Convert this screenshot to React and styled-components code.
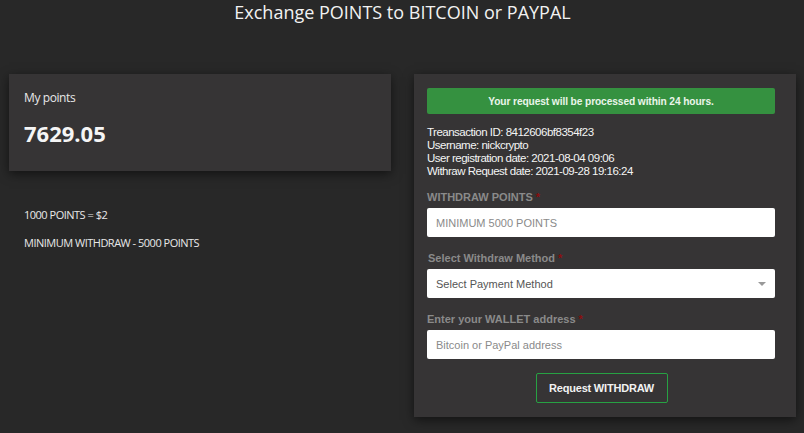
import React from "react";
import styled, { createGlobalStyle } from "styled-components";

const Global = createGlobalStyle`
  html, body { margin: 0; padding: 0; background: #282828; }
  body { font-family: "Open Sans", Arial, sans-serif; color: #f0f0f0; }
  * { box-sizing: border-box; }
`;

const Page = styled.div`
  width: 804px;
  height: 433px;
  padding: 0 8px 0 9px;
  overflow: hidden;
`;

const Title = styled.h1`
  margin: 0;
  padding-top: 0;
  height: 74px;
  text-align: center;
  font-family: "Open Sans", sans-serif;
  font-weight: 400;
  font-size: 18px;
  line-height: 26px;
  color: #f2f2f2;
  letter-spacing: 0;
  margin-top: -1px;
  margin-bottom: 1px;
`;

const Row = styled.div`
  display: grid;
  grid-template-columns: 382px 382px;
  column-gap: 23px;
  align-items: start;
`;

const Card = styled.div`
  background: #363435;
  box-shadow: 0 3px 10px rgba(0, 0, 0, 0.55);
  padding: ${(p) => p.$pad};
`;

const Label = styled.div`
  font-size: 12px;
  line-height: 16px;
  color: #e8e8e8;
  letter-spacing: -0.4px;
`;

const Big = styled.div`
  margin-top: 12px;
  font-size: 22px;
  font-weight: 700;
  line-height: 30px;
  color: #f5f5f5;
`;

const Note = styled.div`
  font-size: 11px;
  line-height: 16px;
  color: #e8e8e8;
  letter-spacing: -0.5px;
  margin-top: ${(p) => p.$mt}px;
  padding-left: 15px;
`;

const Banner = styled.div`
  background: #359140;
  border-radius: 2px;
  height: 26px;
  display: flex;
  align-items: center;
  justify-content: center;
  font-family: "Liberation Sans", Arial, sans-serif;
  font-weight: 700;
  font-size: 10.2px;
  color: #eaf5ea;
  letter-spacing: -0.1px;
`;

const Info = styled.div`
  margin-top: 12px;
  font-family: "Liberation Sans", Arial, sans-serif;
  font-size: 11.5px;
  line-height: 13px;
  color: #f4f4f4;
  letter-spacing: -0.5px;
`;

const Field = styled.div`
  margin-top: ${(p) => p.$mt}px;
`;

const FieldLabel = styled.div`
  font-family: "Liberation Sans", Arial, sans-serif;
  font-weight: 700;
  font-size: 11px;
  line-height: 14px;
  color: #8a8a8a;
  margin-bottom: 4px;
  padding-left: ${(p) => (p.$indent ? 1 : 0)}px;
  span { color: #8b0e0e; }
`;

const Input = styled.div`
  position: relative;
  height: 29px;
  background: #fff;
  border-radius: 2px;
  display: flex;
  align-items: center;
  padding-left: 9px;
  font-family: "Liberation Sans", Arial, sans-serif;
  font-size: 11px;
  color: ${(p) => (p.$dark ? "#555" : "#8a8a8a")};
`;

const Caret = styled.span`
  position: absolute;
  right: 9px;
  top: 13px;
  width: 0;
  height: 0;
  border-left: 4px solid transparent;
  border-right: 4px solid transparent;
  border-top: 4px solid #999;
`;

const ButtonRow = styled.div`
  display: flex;
  justify-content: center;
  margin-top: 14px;
`;

const Button = styled.button`
  width: 132px;
  height: 30px;
  background: transparent;
  border: 1px solid #27a143;
  border-radius: 2px;
  color: #f2f2f2;
  font-family: "Liberation Sans", Arial, sans-serif;
  font-weight: 700;
  font-size: 11px;
  letter-spacing: -0.2px;
  margin-left: 1px;
`;

export default function App() {
  return (
    <>
      <Global />
      <Page>
        <Title>Exchange POINTS to BITCOIN or PAYPAL</Title>
        <Row>
          <div>
            <Card $pad="16px 15px 23px">
              <Label>My points</Label>
              <Big>7629.05</Big>
            </Card>
            <Note $mt={36}>1000 POINTS = $2</Note>
            <Note $mt={12}>MINIMUM WITHDRAW - 5000 POINTS</Note>
          </div>
          <Card $pad="14px 21px 14px 13px">
            <Banner>Your request will be processed within 24 hours.</Banner>
            <Info>
              Treansaction ID: 8412606bf8354f23
              <br />
              Username: nickcrypto
              <br />
              User registration date: 2021-08-04 09:06
              <br />
              Withraw Request date: 2021-09-28 19:16:24
            </Info>
            <Field $mt={12}>
              <FieldLabel>
                WITHDRAW POINTS <span>*</span>
              </FieldLabel>
              <Input>MINIMUM 5000 POINTS</Input>
            </Field>
            <Field $mt={14}>
              <FieldLabel $indent>
                Select Withdraw Method <span>*</span>
              </FieldLabel>
              <Input $dark>
                Select Payment Method
                <Caret />
              </Input>
            </Field>
            <Field $mt={14}>
              <FieldLabel>
                Enter your WALLET address <span>*</span>
              </FieldLabel>
              <Input>Bitcoin or PayPal address</Input>
            </Field>
            <ButtonRow>
              <Button>Request WITHDRAW</Button>
            </ButtonRow>
          </Card>
        </Row>
      </Page>
    </>
  );
}
